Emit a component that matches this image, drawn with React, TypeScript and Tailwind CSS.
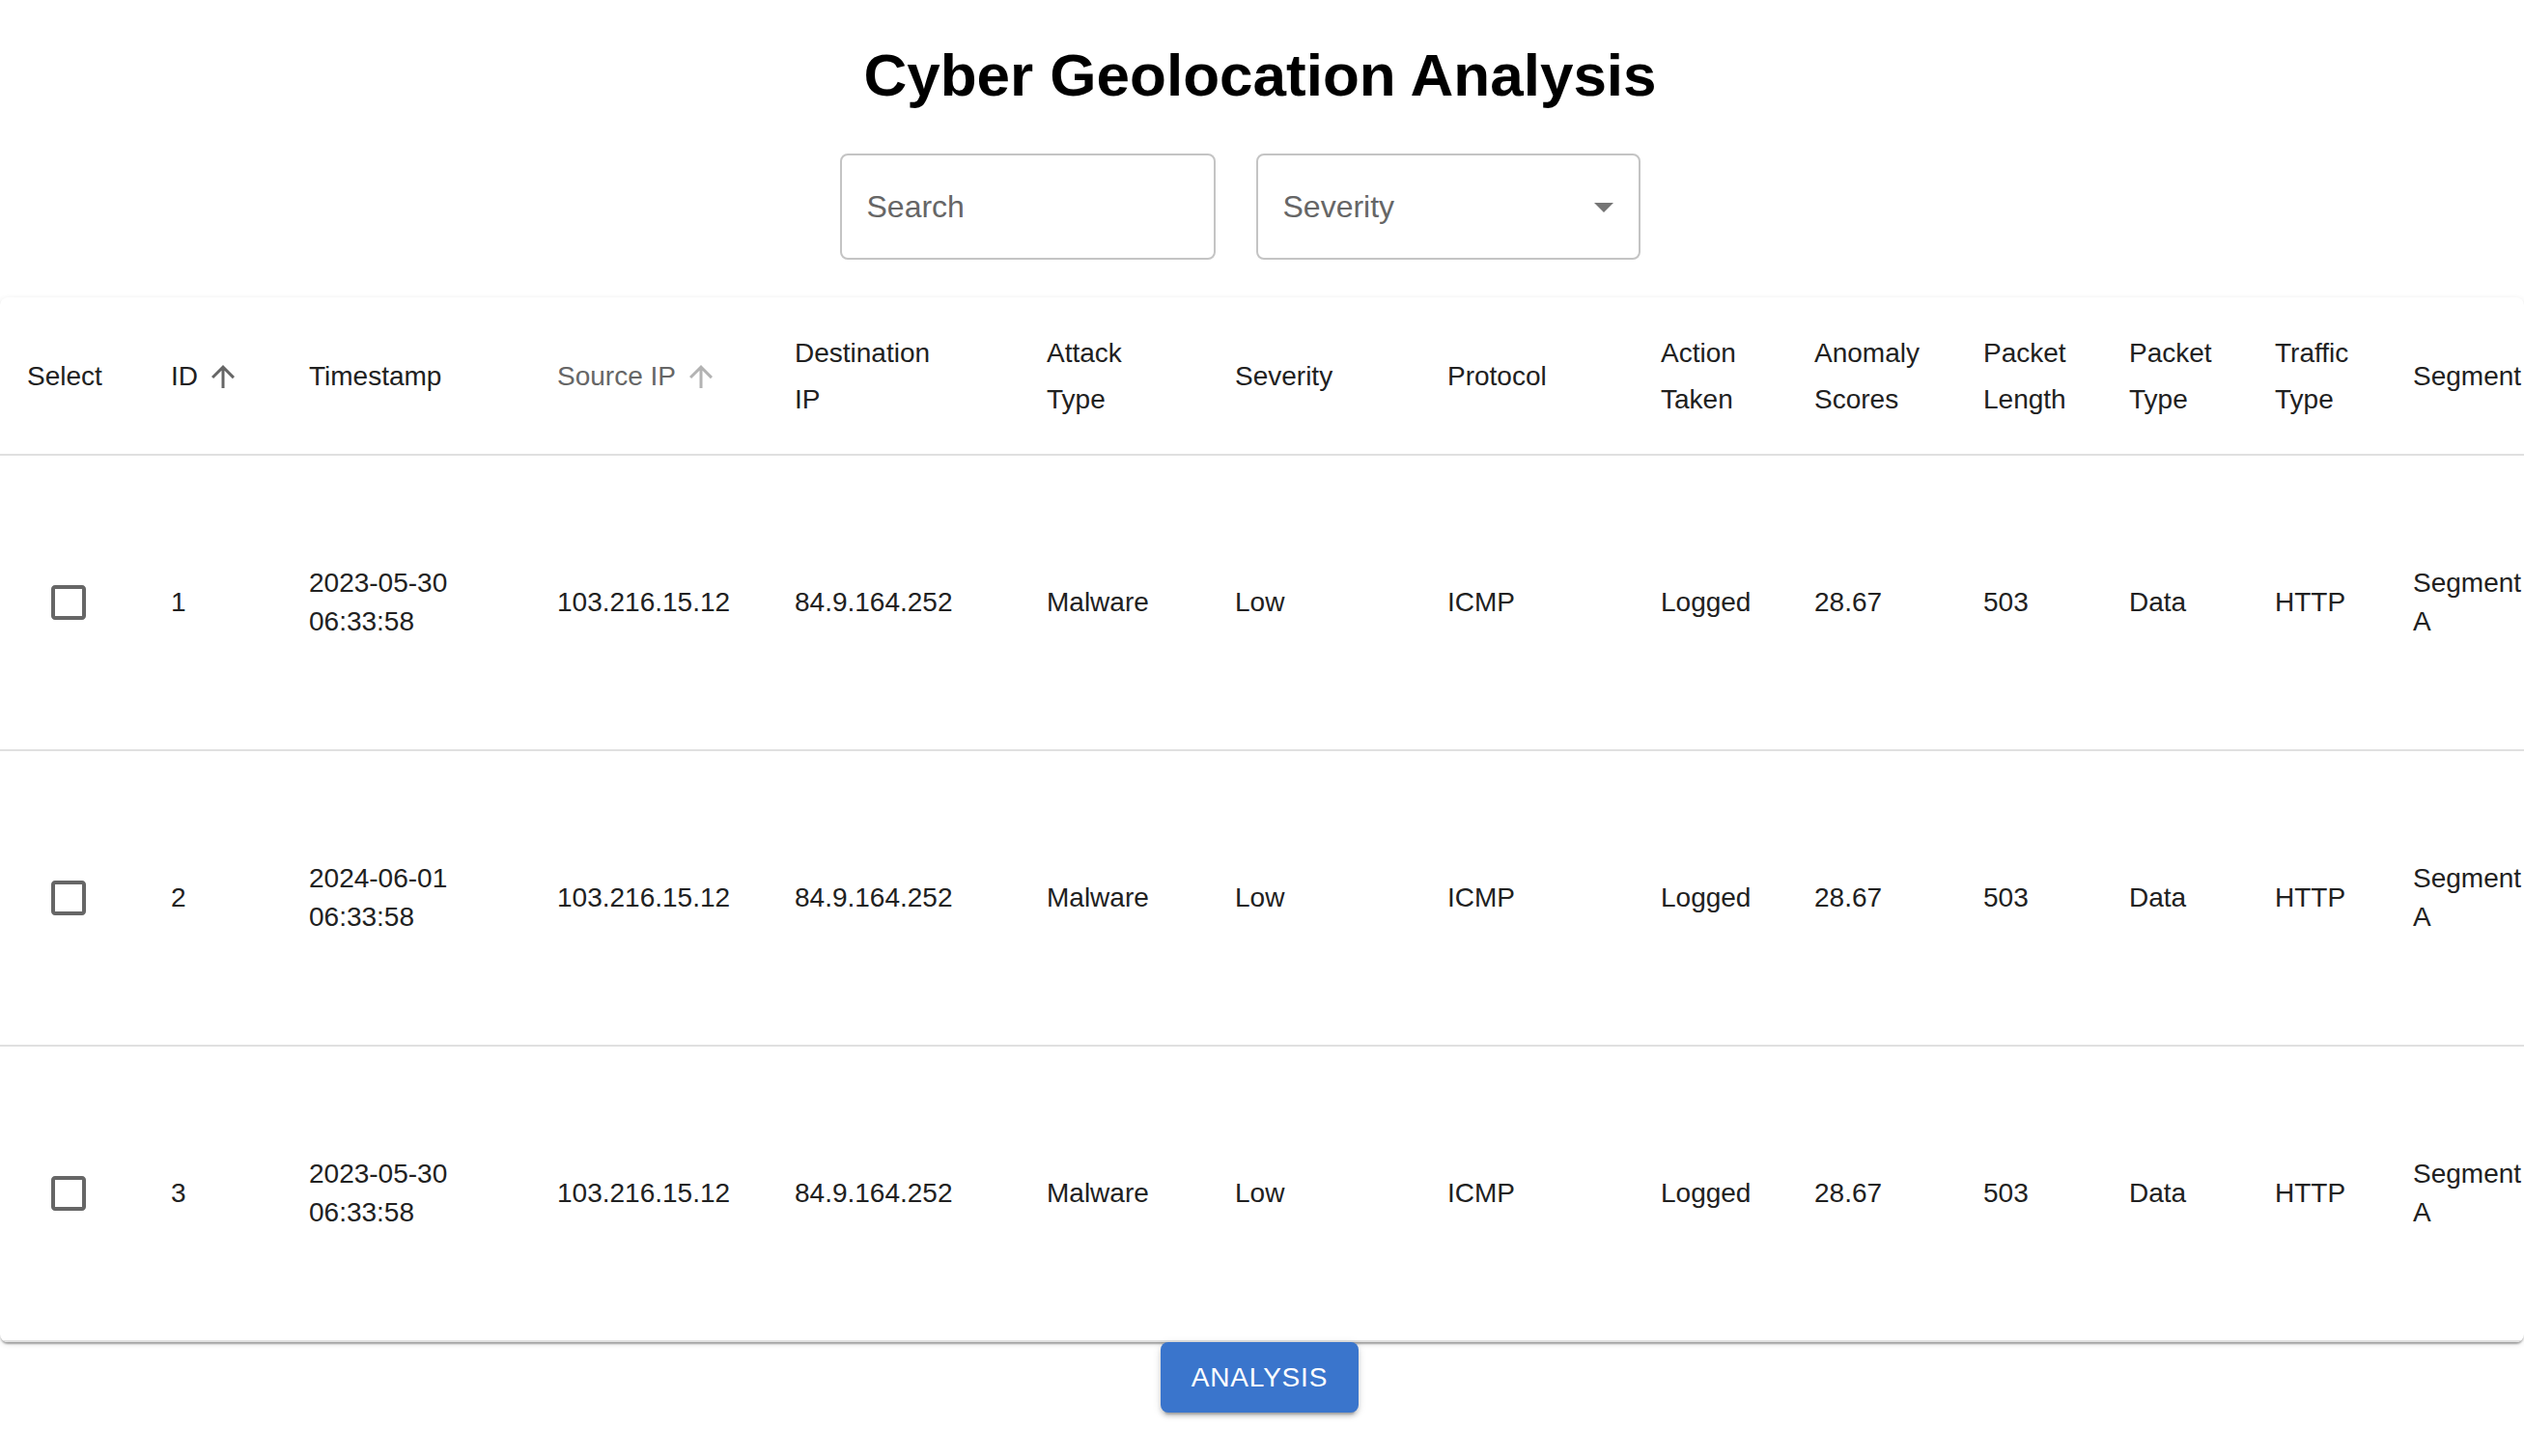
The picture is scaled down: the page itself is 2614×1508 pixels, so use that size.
import React from 'react';

interface Column {
  key: string;
  label: string[];
  width: number;
  sort?: 'active' | 'hover';
}

interface Row {
  id: number;
  date: string;
  time: string;
  sourceIp: string;
  destIp: string;
  attackType: string;
  severity: string;
  protocol: string;
  action: string;
  anomaly: string;
  packetLength: string;
  packetType: string;
  trafficType: string;
  segment: string[];
}

const columns: Column[] = [
  { key: 'select', label: ['Select'], width: 145 },
  { key: 'id', label: ['ID'], width: 143, sort: 'active' },
  { key: 'timestamp', label: ['Timestamp'], width: 257 },
  { key: 'source', label: ['Source IP'], width: 246, sort: 'hover' },
  { key: 'dest', label: ['Destination', 'IP'], width: 261 },
  { key: 'attack', label: ['Attack', 'Type'], width: 195 },
  { key: 'severity', label: ['Severity'], width: 220 },
  { key: 'protocol', label: ['Protocol'], width: 221 },
  { key: 'action', label: ['Action', 'Taken'], width: 159 },
  { key: 'anomaly', label: ['Anomaly', 'Scores'], width: 175 },
  { key: 'plength', label: ['Packet', 'Length'], width: 151 },
  { key: 'ptype', label: ['Packet', 'Type'], width: 151 },
  { key: 'traffic', label: ['Traffic', 'Type'], width: 143 },
  { key: 'segment', label: ['Segment'], width: 180 },
];

const rows: Row[] = [
  { id: 1, date: '2023-05-30', time: '06:33:58' },
  { id: 2, date: '2024-06-01', time: '06:33:58' },
  { id: 3, date: '2023-05-30', time: '06:33:58' },
].map((r) => ({
  ...r,
  sourceIp: '103.216.15.12',
  destIp: '84.9.164.252',
  attackType: 'Malware',
  severity: 'Low',
  protocol: 'ICMP',
  action: 'Logged',
  anomaly: '28.67',
  packetLength: '503',
  packetType: 'Data',
  trafficType: 'HTTP',
  segment: ['Segment', 'A'],
}));

function ArrowUp({ color }: { color: string }) {
  return (
    <svg viewBox="0 0 24 24" className="ml-[8px] mr-[8px] h-[36px] w-[36px] shrink-0" fill={color}>
      <path d="M4 12l1.41 1.41L11 7.83V20h2V7.83l5.58 5.59L20 12l-8-8-8 8z" />
    </svg>
  );
}

function CheckboxBlank() {
  return (
    <svg viewBox="0 0 24 24" className="ml-[19px] h-[48px] w-[48px]" fill="#666666">
      <path d="M19 5v14H5V5h14m0-2H5c-1.11 0-2 .9-2 2v14c0 1.1.89 2 2 2h14c1.1 0 2-.9 2-2V5c0-1.1-.9-2-2-2z" />
    </svg>
  );
}

function HeaderCell({ col, first }: { col: Column; first: boolean }) {
  const pad = first ? 'pl-[28px]' : 'pl-[32px]';
  const textColor = col.sort === 'hover' ? 'text-[#666666]' : 'text-[#212121]';

  return (
    <th className={`h-[164px] border-b-2 border-[#e0e0e0] ${pad} pr-0 pt-[2px] text-left align-middle font-normal leading-[48px] ${textColor}`}>
      {col.sort ? (
        <span className="inline-flex items-center">
          {col.label[0]}
          <ArrowUp color={col.sort === 'active' ? '#666666' : '#b3b3b3'} />
        </span>
      ) : (
        col.label.map((line) => (
          <span key={line} className="block whitespace-nowrap">
            {line}
          </span>
        ))
      )}
    </th>
  );
}

function Cell({ children }: { children: React.ReactNode }) {
  return (
    <td className="h-[306px] border-b-2 border-[#e0e0e0] pl-[32px] align-middle leading-[40px] whitespace-nowrap">
      {children}
    </td>
  );
}

export default function App() {
  return (
    <div className="min-h-screen bg-white font-['Liberation_Sans',Arial,sans-serif] text-[28px] text-[#212121]">
      <h1 className="pt-[47px] pr-[4px] text-center text-[62px] font-bold leading-none text-black">
        Cyber Geolocation Analysis
      </h1>

      <div className="mt-[50px] flex justify-center gap-[42px] pr-[46px]">
        <input
          placeholder="Search"
          className="h-[110px] w-[389px] rounded-[8px] border-2 border-[#c4c4c4] bg-white px-[26px] text-[32px] text-[#212121] outline-none placeholder:text-[#666666]"
        />
        <div className="flex h-[110px] w-[398px] items-center justify-between rounded-[8px] border-2 border-[#c4c4c4] pl-[26px] pr-[12px] text-[32px] text-[#666666]">
          <span>Severity</span>
          <svg viewBox="0 0 24 24" className="h-[48px] w-[48px]" fill="#757575">
            <path d="M7 10l5 5 5-5z" />
          </svg>
        </div>
      </div>

      <div className="mt-[39px] overflow-hidden rounded-[8px] bg-white shadow-[0_4px_2px_-2px_rgba(0,0,0,0.2),0_2px_2px_0_rgba(0,0,0,0.14),0_2px_6px_0_rgba(0,0,0,0.12)]">
        <table className="w-[2647px] table-fixed border-separate border-spacing-0">
          <colgroup>
            {columns.map((c) => (
              <col key={c.key} style={{ width: c.width }} />
            ))}
          </colgroup>
          <thead>
            <tr>
              {columns.map((c, i) => (
                <HeaderCell key={c.key} col={c} first={i === 0} />
              ))}
            </tr>
          </thead>
          <tbody>
            {rows.map((r) => (
              <tr key={r.id}>
                <td className="h-[306px] border-b-2 border-[#e0e0e0] pl-[28px] align-middle">
                  <CheckboxBlank />
                </td>
                <Cell>{r.id}</Cell>
                <Cell>
                  <span className="block">{r.date}</span>
                  <span className="block">{r.time}</span>
                </Cell>
                <Cell>{r.sourceIp}</Cell>
                <Cell>{r.destIp}</Cell>
                <Cell>{r.attackType}</Cell>
                <Cell>{r.severity}</Cell>
                <Cell>{r.protocol}</Cell>
                <Cell>{r.action}</Cell>
                <Cell>{r.anomaly}</Cell>
                <Cell>{r.packetLength}</Cell>
                <Cell>{r.packetType}</Cell>
                <Cell>{r.trafficType}</Cell>
                <Cell>
                  {r.segment.map((s) => (
                    <span key={s} className="block">
                      {s}
                    </span>
                  ))}
                </Cell>
              </tr>
            ))}
          </tbody>
        </table>
      </div>

      <div className="flex justify-center pr-[5px]">
        <button className="h-[73px] w-[205px] rounded-[8px] bg-[#3a75cc] text-[28px] uppercase tracking-[0.8px] text-white shadow-[0_6px_2px_-4px_rgba(0,0,0,0.2),0_4px_4px_0_rgba(0,0,0,0.14),0_2px_10px_0_rgba(0,0,0,0.12)]">
          Analysis
        </button>
      </div>
    </div>
  );
}
